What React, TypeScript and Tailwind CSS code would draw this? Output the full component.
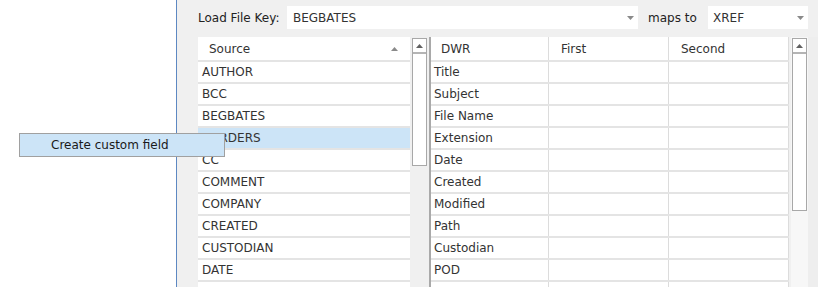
import React from "react";

const sourceRows = [
  "AUTHOR",
  "BCC",
  "BEGBATES",
  "BORDERS",
  "CC",
  "COMMENT",
  "COMPANY",
  "CREATED",
  "CUSTODIAN",
  "DATE",
  "",
];

const dwrRows = [
  "Title",
  "Subject",
  "File Name",
  "Extension",
  "Date",
  "Created",
  "Modified",
  "Path",
  "Custodian",
  "POD",
  "",
];

function DownArrow() {
  return (
    <svg width="7" height="4" viewBox="0 0 7 4" className="block">
      <path d="M0 0 L7 0 L3.5 4 Z" fill="#8a8a8a" />
    </svg>
  );
}

function UpArrow({ color = "#606060" }: { color?: string }) {
  return (
    <svg width="7" height="4" viewBox="0 0 7 4" className="block">
      <path d="M0 4 L7 4 L3.5 0 Z" fill={color} />
    </svg>
  );
}

function ScrollBar({ height }: { height: string }) {
  return (
    <div className={`w-[15px] ${height} border border-[#a8a8a8] bg-white flex flex-col`}>
      <div className="h-[15px] flex items-center justify-center border-b-2 border-[#b4b4b4] shrink-0">
        <UpArrow />
      </div>
      <div className="flex-1" />
    </div>
  );
}

export default function App() {
  return (
    <div className="w-[818px] h-[287px] relative overflow-hidden bg-white flex font-['DejaVu_Sans',sans-serif] text-[12px] text-[#333333]">
      <div className="w-[176px] shrink-0 bg-white" />
      <div className="flex-1 bg-[#f0f0f0] border-l border-[#5d88c2] flex flex-col pl-[21px] pt-[6px]">
        {/* top row */}
        <div className="flex items-center h-[23px]">
          <div className="w-[89px] shrink-0 text-[#222]">Load File Key:</div>
          <div className="w-[351px] h-[23px] bg-white flex items-center pl-[6px] pr-[4px] shrink-0">
            <span className="flex-1">BEGBATES</span>
            <span className="mr-[0px]"><DownArrow /></span>
          </div>
          <div className="w-[70px] pl-[10px] shrink-0 text-[#222]">maps to</div>
          <div className="w-[100px] h-[23px] bg-white flex items-center pl-[5px] pr-[4px] shrink-0">
            <span className="flex-1">XREF</span>
            <DownArrow />
          </div>
        </div>

        {/* tables */}
        <div className="flex mt-[8px] flex-1">
          {/* source table */}
          <div className="w-[212px] shrink-0 flex flex-col">
            <div className="h-[25px] bg-white border-b-2 border-[#e4e4e4] flex items-center pl-[11px] pr-[12px]">
              <span className="flex-1">Source</span>
              <UpArrow color="#8a8a8a" />
            </div>
            {sourceRows.map((r, i) => (
              <div
                key={i}
                className={`h-[22px] border-b-2 border-[#e4e4e4] flex items-center pl-[4px] ${
                  i === 3 ? "bg-[#cce4f7]" : "bg-white"
                }`}
              >
                {r}
              </div>
            ))}
          </div>
          <div className="ml-[2px] mt-[1px] shrink-0">
            <ScrollBar height="h-[128px]" />
          </div>
          <div className="ml-[2px] w-[2px] bg-[#a9a9a9] shrink-0" />

          {/* right table */}
          <div className="w-[358px] shrink-0 flex flex-col bg-white">
            <div className="h-[25px] border-b-2 border-[#e4e4e4] flex">
              <div className="w-[118px] pl-[10px] flex items-center border-r border-[#dcdcdc]">DWR</div>
              <div className="w-[120px] pl-[12px] flex items-center border-r border-[#dcdcdc]">First</div>
              <div className="w-[120px] pl-[12px] flex items-center border-r border-[#dcdcdc]">Second</div>
            </div>
            {dwrRows.map((r, i) => (
              <div key={i} className="h-[22px] border-b-2 border-[#e4e4e4] flex">
                <div className="w-[118px] pl-[3px] flex items-center border-r border-[#dcdcdc]">{r}</div>
                <div className="w-[120px] border-r border-[#dcdcdc]" />
                <div className="w-[120px] border-r border-[#dcdcdc]" />
              </div>
            ))}
          </div>

          <div className="ml-[2px] w-[17px] bg-[#f7f7f7] shrink-0 pt-[1px] pl-[1px]">
            <ScrollBar height="h-[173px]" />
          </div>
          <div className="flex-1 bg-[#eeeeee]" />
        </div>
      </div>

      {/* context menu */}
      <div className="absolute left-[19px] top-[133px] w-[206px] h-[24px] bg-[#cce4f7] border border-[#a0a0a0] flex items-center pl-[31px] text-[#1a1a1a]">
        Create custom field
      </div>
    </div>
  );
}
